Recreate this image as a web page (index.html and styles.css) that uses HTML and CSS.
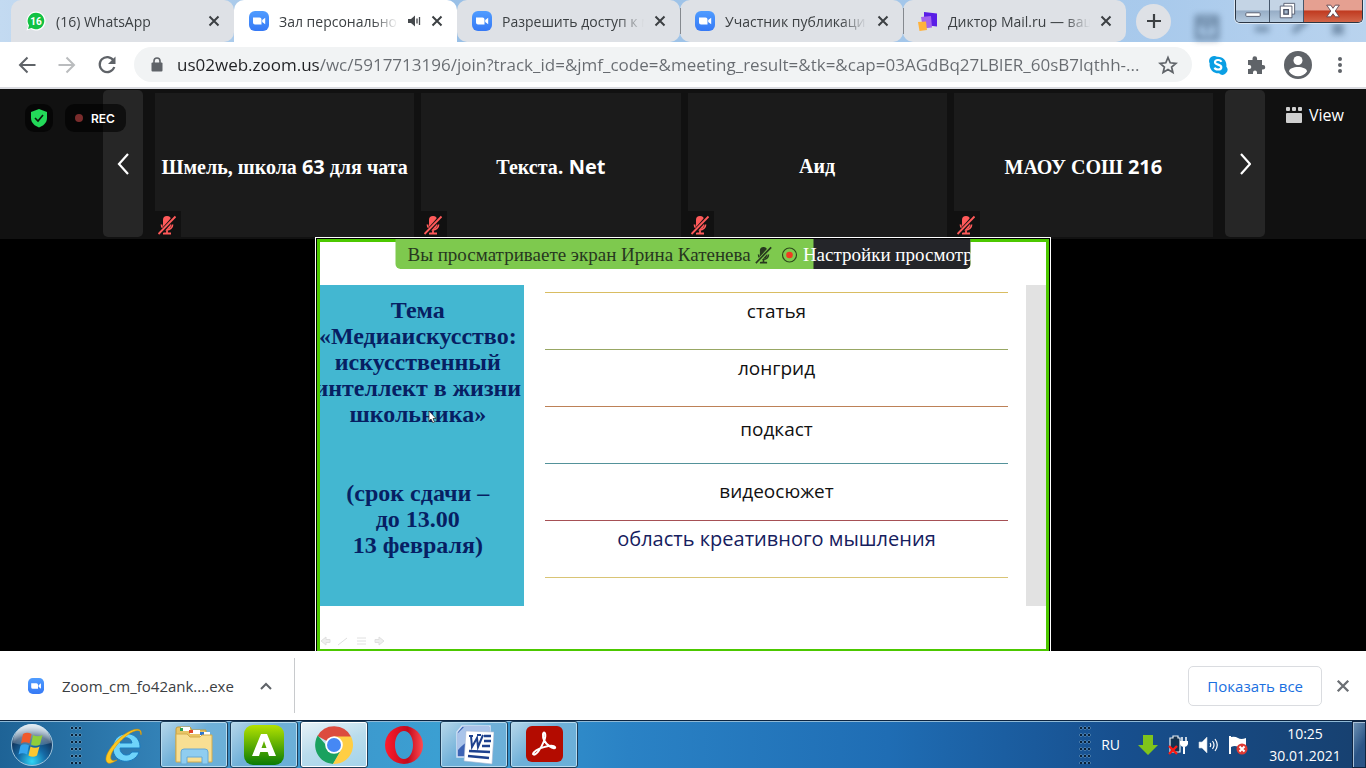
FILE: index.html
```html
<!DOCTYPE html>
<html lang="ru">

	<head>
		<meta charset="UTF-8">
		<meta name="viewport" content="width=device-width,initial-scale=1" />
		<title>Зал персональной конференции</title>
		<link rel="stylesheet" href="styles.css">
	</head>

	<body>
		<!-- shared symbols -->
		<svg class="defs" aria-hidden="true">
			<defs>
				<linearGradient id="zoomBlue" x1="0" y1="0" x2="0" y2="1">
					<stop offset="0" stop-color="#4f9cff" />
					<stop offset="1" stop-color="#3679f5" />
				</linearGradient>
				<symbol id="close" viewBox="0 0 12 12">
					<path d="M1.500 1.500l9 9M10.500 1.500l-9 9" fill="none" stroke="currentColor" stroke-width="2" />
				</symbol>
				<symbol id="zoom" viewBox="0 0 20 20">
					<rect width="20" height="20" rx="6" fill="url(#zoomBlue)" />
					<path d="M4 6.500h6.500a2 2 0 0 1 2 2v5H6a2 2 0 0 1-2-2zM13.200 9l3-2.300v6.600l-3-2.300z" fill="#fff" />
				</symbol>
				<symbol id="muted" viewBox="0 0 20 20">
					<path d="M6 5a4 4 0 0 1 8 0v5a4 4 0 0 1-8 0z" fill="currentColor" />
					<path d="M4.500 9.500c0 7 11 7 11 0M10 15v3M6 18.500h8" fill="none" stroke="currentColor" stroke-width="1.800" />
					<path d="M18.500 1L2 19.500" stroke="var(--cut)" stroke-width="4" />
					<path d="M18.500 1.500L1.500 19" stroke="currentColor" stroke-width="1.800" />
				</symbol>
			</defs>
		</svg>

		<header class="tabbar">
			<div class="tab">
				<svg class="favicon" viewBox="0 0 20 20">
					<path d="M10 .5A9.500 9.500 0 1 1 5 18L.5 19.500 2 15A9.500 9.500 0 0 1 10 .5z" fill="#fff" />
					<path d="M10 1.700A8.300 8.300 0 1 1 5.500 17L2 18l1-3.500A8.300 8.300 0 0 1 10 1.700z" fill="#12c144" />
					<text x="10" y="13.500" class="badge-num">16</text>
				</svg>
				<span class="tab-title">(16) WhatsApp</span>
				<button class="icon-btn tab-close" aria-label="Закрыть"><svg><use href="#close" /></svg></button>
			</div>
			<div class="tab active">
				<svg class="favicon"><use href="#zoom" /></svg>
				<span class="tab-title">Зал персонально</span>
				<svg class="sound" viewBox="0 0 13 12">
					<path d="M0 4h3l4-3.500v11L3 8H0z" fill="#45494d" />
					<path d="M9 3.500v5M11.500 2v8" stroke="#45494d" stroke-width="1.300" />
				</svg>
				<button class="icon-btn tab-close" aria-label="Закрыть"><svg><use href="#close" /></svg></button>
			</div>
			<div class="tab">
				<svg class="favicon"><use href="#zoom" /></svg>
				<span class="tab-title">Разрешить доступ к м</span>
				<button class="icon-btn tab-close" aria-label="Закрыть"><svg><use href="#close" /></svg></button>
			</div>
			<div class="tab divided">
				<svg class="favicon"><use href="#zoom" /></svg>
				<span class="tab-title">Участник публикаци</span>
				<button class="icon-btn tab-close" aria-label="Закрыть"><svg><use href="#close" /></svg></button>
			</div>
			<div class="tab divided">
				<svg class="favicon" viewBox="0 0 20 20">
					<path d="M6 1l13 1.500v13L6 14z" fill="#5a1ee6" />
					<path d="M3 6l10-1 1 11.500-9 1z" fill="#a463ef" />
					<path d="M0 11l8-.5 1 8.500-7.500 1z" fill="#ffb23c" />
				</svg>
				<span class="tab-title">Диктор Mail.ru — ваш</span>
				<button class="icon-btn tab-close" aria-label="Закрыть"><svg><use href="#close" /></svg></button>
			</div>
			<button class="icon-btn new-tab" aria-label="Новая вкладка">
				<svg viewBox="0 0 16 16"><path d="M8 1v14M1 8h14" stroke="#3c4043" stroke-width="2.200" /></svg>
			</button>
			<svg class="glass" viewBox="0 0 180 28" aria-hidden="true">
				<path d="M14 3h20v21H14zM14 9h20M24 9v10" fill="none" stroke="#4d6884" stroke-width="4" />
				<path d="M72 15h14M110 18l14-12M150 10l10 10M160 10l-10 10" stroke="#4d6884" stroke-width="5" />
			</svg>
			<div class="win-controls">
				<button class="win-btn" aria-label="Свернуть">
					<svg viewBox="0 0 20 20"><rect x="2" y="12" width="16" height="4" rx="1" fill="#fff" stroke="#50576a" /></svg>
				</button>
				<button class="win-btn" aria-label="Свернуть в окно">
					<svg viewBox="0 0 20 20"><path d="M6.500 1.500h12v12h-3v4h-13v-13h4z" fill="#fff" stroke="#50576a" /><path d="M6.500 4.500h9v9" fill="none" stroke="#50576a" /><rect x="6.500" y="8.500" width="5" height="5" fill="#a5b9cf" stroke="#50576a" stroke-width="1.500" /></svg>
				</button>
				<button class="win-btn win-close" aria-label="Закрыть окно">
					<svg viewBox="0 0 20 20"><path d="M3 3.500h4.500L10 7l2.500-3.500H17L12.500 10l4.500 6.500h-4.500L10 13l-2.500 3.500H3L7.500 10z" fill="#fff" stroke="#5d4650" /></svg>
				</button>
			</div>
		</header>

		<nav class="toolbar">
			<button class="icon-btn" aria-label="Назад">
				<svg viewBox="0 0 20 20"><path d="M18.500 10H3M10.500 2.500L3 10l7.500 7.500" fill="none" stroke="#5f6368" stroke-width="2" /></svg>
			</button>
			<button class="icon-btn" aria-label="Вперёд" disabled>
				<svg viewBox="0 0 20 20"><path d="M1.500 10H17M9.500 2.500L17 10l-7.500 7.500" fill="none" stroke="#babcbe" stroke-width="2" /></svg>
			</button>
			<button class="icon-btn" aria-label="Обновить">
				<svg viewBox="0 0 20 20"><path d="M16.500 5.500A7.500 7.500 0 1 0 17.300 12" fill="none" stroke="#5f6368" stroke-width="2.200" /><path d="M18.500 1.500v7.500h-7.500z" fill="#5f6368" /></svg>
			</button>
			<div class="omnibox">
				<svg class="lock" viewBox="0 0 12 15">
					<rect x=".5" y="5.500" width="11" height="9" rx="1" fill="#5f6368" />
					<path d="M3 6V4a3 3 0 0 1 6 0v2" fill="none" stroke="#5f6368" stroke-width="1.600" />
				</svg>
				<input class="url" type="text" aria-label="Адрес" value="us02web.zoom.us/wc/5917713196/join?track_id=&amp;jmf_code=&amp;meeting_result=&amp;tk=&amp;cap=03AGdBq27LBlER_60sB7lqthh-...">
				<button class="icon-btn" aria-label="В закладки">
					<svg viewBox="0 0 20 20"><path d="M10 2.500l2.200 5.300 5.700.5-4.300 3.700 1.300 5.500-4.900-3-4.900 3 1.300-5.500L2.100 8.300l5.700-.5z" fill="none" stroke="#5f6368" stroke-width="1.700" /></svg>
				</button>
			</div>
			<div class="extensions">
				<button class="icon-btn" aria-label="Skype">
					<svg viewBox="0 0 20 20"><path d="M6 1a5 5 0 0 1 3 .7 8.500 8.500 0 0 1 9.300 9.800A5 5 0 0 1 11 18.300 8.500 8.500 0 0 1 1.700 8.500 5 5 0 0 1 6 1z" fill="#0a9fe4" /><path d="M13.300 6.800C12.500 4.300 7 4.400 7 7.200s6.300 2 6.300 5-5.800 3-6.700.4" fill="none" stroke="#fff" stroke-width="2.200" /></svg>
				</button>
				<button class="icon-btn" aria-label="Расширения">
					<svg viewBox="0 0 20 20"><path d="M2 5h4.500V3.500a2.300 2.300 0 0 1 4.600 0V5H16v5h1a2.200 2.200 0 0 1 0 4.500h-1V19h-5v-1.500a2 2 0 0 0-4 0V19H2v-5h1.300a2 2 0 0 0 0-4H2z" fill="#5f6368" /></svg>
				</button>
				<button class="icon-btn avatar" aria-label="Профиль">
					<svg viewBox="0 0 28 28"><circle cx="14" cy="14" r="14" fill="#5f6368" /><circle cx="14" cy="9.500" r="4.500" fill="#fff" /><path d="M5 20.500c0-6 18-6 18 0a11 11 0 0 1-18 0z" fill="#fff" /></svg>
				</button>
				<button class="icon-btn" aria-label="Меню">
					<svg viewBox="0 0 20 20" fill="#5f6368"><circle cx="10" cy="4" r="2" /><circle cx="10" cy="10" r="2" /><circle cx="10" cy="16" r="2" /></svg>
				</button>
			</div>
		</nav>

		<main class="meeting">
			<section class="strip">
				<button class="pager" aria-label="Предыдущие участники">
					<svg viewBox="0 0 12 22"><path d="M11 1L2 11l9 10" fill="none" stroke="#fff" stroke-width="2.200" /></svg>
				</button>
				<ul class="gallery">
					<li class="tile">
						<span>Шмель, школа <b>63</b> для чата</span>
						<i class="mic-off"><svg><use href="#muted" /></svg></i>
					</li>
					<li class="tile">
						<span>Текста<b>. Net</b></span>
						<i class="mic-off"><svg><use href="#muted" /></svg></i>
					</li>
					<li class="tile">
						<span>Аид</span>
						<i class="mic-off"><svg><use href="#muted" /></svg></i>
					</li>
					<li class="tile">
						<span>МАОУ СОШ <b>216</b></span>
						<i class="mic-off"><svg><use href="#muted" /></svg></i>
					</li>
				</ul>
				<button class="pager" aria-label="Следующие участники">
					<svg viewBox="0 0 12 22"><path d="M2 1l9 10-9 10" fill="none" stroke="#fff" stroke-width="2.200" /></svg>
				</button>
				<div class="status">
					<button class="chip" aria-label="Шифрование">
						<svg viewBox="0 0 18 20"><path d="M9 1l8 3v6c0 5-4 8-8 9.500C5 18 1 15 1 10V4z" fill="#23d959" /><path d="M5 10l3 3 5-6" fill="none" stroke="#0a1a0d" stroke-width="1.600" /></svg>
					</button>
					<span class="chip rec">REC</span>
				</div>
				<button class="view">
					<svg viewBox="0 0 16 16" fill="#d0d0d0"><rect width="4" height="4" rx="1" /><rect x="6" width="4" height="4" rx="1" /><rect x="12" width="4" height="4" rx="1" /><rect y="6" width="16" height="10" rx="1" /></svg>
					View
				</button>
			</section>

			<section class="stage">
				<div class="share">
					<div class="banner">
						<p class="banner-text">
							Вы просматриваете экран Ирина Катенева
							<svg class="banner-mic" viewBox="0 0 20 20"><use href="#muted" /></svg>
							<svg class="banner-rec" viewBox="0 0 16 16"><circle cx="8" cy="8" r="7" fill="none" stroke="#2d4a1c" stroke-width="1.200" /><circle cx="8" cy="8" r="3.300" fill="#f03a22" /></svg>
						</p>
						<button class="banner-menu">Настройки просмотра</button>
					</div>
					<div class="slide">
						<div class="topic">
							<h1>Тема<br>«Медиаискусство:<br>искусственный<br>интеллект в жизни<br>школьника»</h1>
							<p>(срок сдачи –<br>до 13.00<br>13 февраля)</p>
							<svg class="pointer" viewBox="0 0 8 12"><path d="M1 0v10l2-2 2 4 1.500-1L5 7.500h3z" fill="#fff" stroke="#222" stroke-width=".7" /></svg>
						</div>
						<ul class="formats">
							<li class="gold">статья</li>
							<li class="olive">лонгрид</li>
							<li class="brown mid">подкаст</li>
							<li class="teal low">видеосюжет</li>
							<li class="wine navy">область креативного мышления</li>
						</ul>
						<div class="edge"></div>
					</div>
					<svg class="slide-nav" viewBox="0 0 66 12" aria-hidden="true">
						<path d="M1 6l5-4v2.500h4v3H6V10z" />
						<path d="M18 10l9-7" />
						<path d="M37 3h9M37 6h9M37 9h9" />
						<path d="M64 6l-5-4v2.500h-4v3h4V10z" />
					</svg>
				</div>
			</section>
		</main>

		<section class="downloads">
			<div class="download">
				<svg class="file-icon"><use href="#zoom" /></svg>
				<a class="file-name" href="#">Zoom_cm_fo42ank....exe</a>
				<button class="icon-btn" aria-label="Действия">
					<svg class="chevron" viewBox="0 0 12 8"><path d="M1 7l5-5 5 5" fill="none" stroke="#5f6368" stroke-width="2" /></svg>
				</button>
			</div>
			<button class="show-all">Показать все</button>
			<button class="icon-btn shelf-close" aria-label="Закрыть панель"><svg><use href="#close" /></svg></button>
		</section>

		<footer class="taskbar">
			<button class="start" aria-label="Пуск">
				<svg viewBox="0 0 44 44">
					<defs>
						<radialGradient id="orb" cx=".5" cy=".9" r=".85">
							<stop offset="0" stop-color="#2fd6f6" />
							<stop offset=".4" stop-color="#156aa6" />
							<stop offset=".75" stop-color="#12375f" />
							<stop offset="1" stop-color="#8fb0c8" />
						</radialGradient>
						<linearGradient id="orbShine" x1="0" y1="0" x2="0" y2="1">
							<stop offset="0" stop-color="#fff" stop-opacity=".75" />
							<stop offset="1" stop-color="#fff" stop-opacity=".15" />
						</linearGradient>
					</defs>
					<circle cx="22" cy="22" r="20.500" fill="url(#orb)" stroke="#9fc4dc" />
					<path d="M3 20a19 19 0 0 1 38 0q-19 6-38 0z" fill="url(#orbShine)" />
					<path d="M13 11q4-2.500 8.500 0l-2 9.500q-4.500-2.500-8.500 0z" fill="#f0592a" />
					<path d="M23 12q4.500 2.500 9.500 0l-2.500 9.500q-4 2.500-9 0z" fill="#8fce3a" />
					<path d="M10.500 22.500q4-2.500 8.500 0l-2 9q-4.500-2.500-8.500 0z" fill="#35a5ee" />
					<path d="M20.500 23.500q4.500 2.500 9 0l-2.500 9q-4 2.500-8.500 0z" fill="#fdc72f" />
				</svg>
			</button>
			<span class="grip"></span>
			<button class="task plain" aria-label="Internet Explorer">
				<svg viewBox="0 0 40 40">
					<path d="M36 23H16c0 8 9 9 12 4h7c-4 13-26 13-26-4 0-19 28-19 27 0zm-8-5c-1-7-11-7-12 0z" fill="#6fd4fa" stroke="#1a7cc0" stroke-width="1" />
					<path d="M37 10c2-8-7-7-16-1C9 17-3 34 4 38c2 1 6-1 9-3-6 2-7-1-6-5C10 20 29 2 36 6z" fill="#fcc822" stroke="#d89400" stroke-width=".6" />
				</svg>
			</button>
			<button class="task" aria-label="Проводник">
				<svg viewBox="0 0 40 40">
					<path d="M2 4q0-2 2-2h12l2 3h14v30H2z" fill="#e8c566" stroke="#c39a38" />
					<path d="M7 2h9v4H7zM16 5h10v4H16zM26 7h10v4H26z" fill="#fff" />
					<path d="M6 3h3v3H6z" fill="#2da052" />
					<path d="M15 5h4v3h-4z" fill="#e0492c" />
					<path d="M26 7h4v3h-4z" fill="#2e75d0" />
					<path d="M2 9h11l3 3h10l2-2h10v27H2z" fill="#f8df93" stroke="#d4ac4c" />
					<path d="M7 39V27q0-3 3-3h21q3 0 3 3v12h-6v-7H13v7z" fill="#8fcdf0" stroke="#66a8d4" />
				</svg>
			</button>
			<button class="task" aria-label="Amigo">
				<svg viewBox="0 0 40 40">
					<defs><linearGradient id="lime" x1="0" y1="0" x2="0" y2="1"><stop offset="0" stop-color="#b4e200" /><stop offset="1" stop-color="#087a06" /></linearGradient></defs>
					<rect width="40" height="40" rx="9" fill="url(#lime)" />
					<path d="M17 9h6l9 22h-7l-1.300-4h-7.400L15 31H8zm3 7l-2.500 7h5z" fill="#fff" />
				</svg>
			</button>
			<button class="task current" aria-label="Chrome">
				<svg viewBox="0 0 40 40">
					<path d="M20 20L3.500 11A19 19 0 0 1 37 11.500z" fill="#dc4b3e" />
					<path d="M20 20h-8L3.700 10.500A19 19 0 0 0 19 39l8-13z" fill="#1aa15f" />
					<path d="M20 11.500h17A19 19 0 0 1 19 39l9-16z" fill="#ffce44" />
					<circle cx="20" cy="20" r="8.800" fill="#fff" />
					<circle cx="20" cy="20" r="7" fill="#4688f4" />
				</svg>
			</button>
			<button class="task plain" aria-label="Opera">
				<svg viewBox="0 0 40 40">
					<defs><linearGradient id="operaRed" x1="0" y1="0" x2="1" y2="0"><stop offset="0" stop-color="#ff1b2d" /><stop offset=".6" stop-color="#c20a1c" /><stop offset="1" stop-color="#ff4a50" /></linearGradient></defs>
					<path d="M20 1a19 19 0 1 0 0 38 19 19 0 1 0 0-38zm0 5c5 0 9 6 9 14s-4 14-9 14-9-6-9-14 4-14 9-14z" fill="url(#operaRed)" fill-rule="evenodd" />
				</svg>
			</button>
			<button class="task" aria-label="Word">
				<svg viewBox="0 0 40 40">
					<path d="M8 1h28v31H3V7z" fill="#3c63b4" stroke="#d4e2f6" stroke-width="1.500" />
					<path d="M10 2h25v8Q16 11 4 25V8z" fill="#a9c4ea" />
					<path d="M12 6l28 1-2 32-28-3z" fill="#fff" stroke="#a9b9d4" stroke-width=".6" />
					<path d="M15 11h4M23 10h4M17 11l1 11 5-9 1 9 5-12" fill="none" stroke="#1e418e" stroke-width="2" />
					<path d="M30 11h7M30 16h7M28 21h8M15 26l21 1M14 31l21 2" stroke="#1e418e" stroke-width="2.400" />
				</svg>
			</button>
			<button class="task" aria-label="Acrobat Reader">
				<svg viewBox="0 0 40 40">
					<rect x="2" y="1" width="37" height="36" rx="6" fill="#b30b00" />
					<path d="M9 29c2-6 20-10 22-7 2 4-13-2-12-13 1-4 4 0 1 7-3 8-9 16-11 13z" fill="none" stroke="#fff" stroke-width="2" />
				</svg>
			</button>
			<div class="tray">
				<span class="grip"></span>
				<span class="lang">RU</span>
				<svg viewBox="0 0 20 20"><path d="M5 0h10v10h5L10 20 0 10h5z" fill="#7fc41c" /></svg>
				<svg viewBox="0 0 20 20">
					<path d="M5 1h5v2h2v14H2V3h3z" fill="#15324f" stroke="#e8eef4" stroke-width="1.200" />
					<path d="M14 2v4M18 2v4" stroke="#fff" stroke-width="1.500" />
					<path d="M12 6h8v3q-1 3-4 3t-4-3zM15 12h2v7h-2z" fill="#fff" />
					<path d="M1 11l8 8M9 11l-8 8" stroke="#ff1a12" stroke-width="2.400" />
				</svg>
				<svg viewBox="0 0 20 20">
					<path d="M1 7h3l5-5v16l-5-5H1z" fill="#fff" stroke="#c5d2de" stroke-width=".6" />
					<path d="M12 8q1.500 2 0 4M14.500 6q3 4 0 8M17 4q4.500 6 0 12" fill="none" stroke="#fff" stroke-width="1.200" />
				</svg>
				<svg viewBox="0 0 20 20">
					<path d="M2 1v18" stroke="#fff" stroke-width="2" />
					<path d="M3 2q4-1 7 1t8 0v9q-5 2-8 0t-7 0z" fill="#fff" />
					<circle cx="14" cy="14" r="5.500" fill="#dd3a34" />
					<path d="M11.500 11.500l5 5M16.500 11.500l-5 5" stroke="#fff" stroke-width="2" />
				</svg>
				<time class="clock">10:25<br>30.01.2021</time>
				<button class="desktop" aria-label="Свернуть все окна"></button>
			</div>
		</footer>
	</body>

</html>
```
FILE: styles.css
```css
* {
	box-sizing: border-box;
	margin: 0;
	padding: 0;
}

body {
	display: flex;
	flex-direction: column;
	height: 100vh;
	font-family: "Open Sans", "Noto Sans", sans-serif;
	font-size: 14px;
	color: #3c4043;
	background: #000;
}

button {
	border: 0;
	background: none;
	font: inherit;
	color: inherit;
}

svg {
	display: block;
	flex: none;
}

ul {
	list-style: none;
}

.defs {
	position: absolute;
	width: 0;
	height: 0;
}

.icon-btn {
	display: flex;
	flex: none;
	align-items: center;
	justify-content: center;
}

.icon-btn svg {
	width: 20px;
	height: 20px;
}

/* tabs */
.tabbar {
	position: relative;
	display: flex;
	flex: none;
	align-items: center;
	height: 42px;
	padding-left: 11px;
	background: linear-gradient(90deg, #c3daf1, #98bfe6 30%, #a9caec 85%, #b9d3ee);
}

.tab {
	position: relative;
	display: flex;
	flex: 0 1 223px;
	align-items: center;
	gap: 10px;
	min-width: 0;
	height: 42px;
	padding: 0 14px 0 15px;
	border-radius: 10px;
	background: #dee1e6;
}

.tab:first-child {
	border-radius: 10px 10px 10px 0;
}

.tab.active {
	border-radius: 10px 10px 0 0;
	background: #fff;
}

.tab.divided:before {
	position: absolute;
	left: 0;
	height: 26px;
	width: 1px;
	content: '';
	background: #85898f;
}

.favicon {
	width: 20px;
	height: 20px;
}

.badge-num {
	font-family: Roboto, sans-serif;
	font-size: 10px;
	font-weight: 700;
	text-anchor: middle;
	fill: #fff;
}

.tab-title {
	flex: 1;
	overflow: hidden;
	white-space: nowrap;
	-webkit-mask-image: linear-gradient(90deg, #000 calc(100% - 26px), transparent);
	mask-image: linear-gradient(90deg, #000 calc(100% - 26px), transparent);
}

.sound {
	width: 13px;
	height: 12px;
}

.tab-close svg {
	width: 12px;
	height: 12px;
}

.new-tab {
	width: 35px;
	height: 35px;
	margin-left: 10px;
	border-radius: 50%;
	background: #dee1e6;
}

.new-tab svg {
	width: 16px;
	height: 16px;
}

.glass {
	width: 180px;
	height: 28px;
	margin: 14px 0 0 12px;
	filter: blur(3px);
	opacity: .7;
}

.win-controls {
	position: absolute;
	top: 0;
	right: 3px;
	display: flex;
	height: 23px;
	overflow: hidden;
	border: 1px solid #2b3644;
	border-top: 0;
	border-radius: 0 0 5px 5px;
	box-shadow: 0 0 0 1px #dce8f4;
}

.win-btn {
	display: flex;
	align-items: center;
	justify-content: center;
	width: 34px;
	border-right: 1px solid #46566a;
	background: linear-gradient(#c4d4e5 45%, #96adc6 50%, #b4c9de);
}

.win-btn svg {
	width: 18px;
	height: 18px;
}

.win-close {
	width: 58px;
	border-right: 0;
	background: linear-gradient(#e5a091 45%, #c03a20 50%, #d2664a);
}

/* toolbar */
.toolbar {
	display: flex;
	flex: none;
	align-items: center;
	height: 47px;
	padding: 0 16px 0 17px;
	gap: 20px;
	border-bottom: 2px solid #dadbe0;
	background: #fff;
}

.omnibox {
	display: flex;
	flex: 1;
	align-items: center;
	gap: 14px;
	min-width: 0;
	height: 35px;
	margin-left: -3px;
	padding: 0 14px 0 17px;
	border-radius: 18px;
	background: #f1f3f4;
}

.lock {
	width: 12px;
	height: 15px;
}

.url {
	flex: 1;
	min-width: 0;
	height: 30px;
	border: 0;
	outline: 0;
	font: 17px "Open Sans", "Noto Sans", sans-serif;
	/* host part is darker than the path */
	color: transparent;
	background: linear-gradient(90deg, #202124 143px, #676b70 143px);
	-webkit-background-clip: text;
	background-clip: text;
}

.extensions {
	display: flex;
	align-items: center;
	gap: 18px;
	margin-left: -4px;
}

.avatar svg {
	width: 28px;
	height: 28px;
}

/* meeting */
.meeting {
	display: flex;
	flex: 1;
	flex-direction: column;
	min-height: 0;
}

.strip {
	position: relative;
	display: flex;
	flex: none;
	gap: 12px;
	height: 150px;
	padding: 1px 101px 2px 103px;
	background: #111;
}

.pager {
	display: flex;
	flex: none;
	align-items: center;
	justify-content: center;
	width: 40px;
	border-radius: 5px;
	background: #262626;
}

.pager svg {
	width: 12px;
	height: 22px;
}

.gallery {
	display: grid;
	flex: 1;
	grid-template-columns: repeat(4, 1fr);
	gap: 7px;
	padding-top: 3px;
}

.tile {
	position: relative;
	display: flex;
	align-items: center;
	justify-content: center;
	padding-top: 3px;
	font: bold 20px "Liberation Serif", serif;
	white-space: nowrap;
	color: #fff;
	background: #1b1b1b;
}

.tile b {
	font-family: "Open Sans", sans-serif;
	font-weight: 700;
}

.mic-off {
	--cut: #111;
	position: absolute;
	bottom: 0;
	left: 0;
	padding: 4px 4px 2px 2px;
	color: #ff5a5a;
	background: #111;
}

.mic-off svg {
	width: 20px;
	height: 20px;
}

.status {
	position: absolute;
	top: 15px;
	left: 25px;
	display: flex;
	gap: 12px;
}

.chip {
	display: flex;
	align-items: center;
	justify-content: center;
	min-width: 28px;
	height: 28px;
	border-radius: 9px;
	background: rgba(0, 0, 0, .6);
}

.chip svg {
	width: 18px;
	height: 20px;
}

.rec {
	gap: 8px;
	padding: 0 11px 0 10px;
	font: 600 12px Inter, sans-serif;
	color: #fff;
}

.rec:before {
	width: 8px;
	height: 8px;
	border-radius: 50%;
	content: '';
	background: #7a2c2c;
}

.view {
	position: absolute;
	top: 15px;
	right: 22px;
	display: flex;
	align-items: center;
	gap: 7px;
	font-size: 16px;
	line-height: 22px;
	color: #fff;
}

.view svg {
	width: 16px;
	height: 16px;
}

.stage {
	display: flex;
	flex: 1;
	justify-content: center;
	min-height: 0;
	background: #000;
}

.share {
	position: relative;
	z-index: 1;
	flex: none;
	height: 100%;
	aspect-ratio: 16 / 9;
	padding-top: 43px;
	border: 3px solid #4cc800;
	border-bottom-width: 2px;
	background: #fff;
	box-shadow: 0 0 0 1px #000, 0 0 0 2px #fff;
	clip-path: inset(-2px -2px 0 -2px);
}

.banner {
	position: absolute;
	top: -3px;
	left: 50%;
	display: flex;
	width: 575px;
	height: 30px;
	overflow: hidden;
	border-radius: 0 0 5px 5px;
	font: 19px/32px "Liberation Serif", serif;
	white-space: nowrap;
	background: #7ec94e;
	transform: translateX(-50%);
}

.banner-text {
	--cut: #7ec94e;
	display: flex;
	flex: 1;
	align-items: center;
	padding: 2px 0 0 12px;
	color: #27381f;
}

.banner-mic {
	width: 18px;
	height: 18px;
	margin-left: 4px;
}

.banner-rec {
	width: 16px;
	height: 16px;
	margin-left: 9px;
}

.banner-menu {
	display: flex;
	flex: none;
	justify-content: center;
	width: 157px;
	color: #fff;
	background: #242529;
}

.slide {
	display: flex;
	height: 321px;
}

.topic {
	position: relative;
	display: flex;
	flex: none;
	flex-direction: column;
	align-items: center;
	gap: 53px;
	width: 204px;
	overflow: hidden;
	padding: 12px 8px 0 0;
	font: bold 24px/26px "Liberation Serif", serif;
	text-align: center;
	white-space: nowrap;
	color: #071f63;
	background: #43b7d1;
}

.topic h1 {
	font: inherit;
}

.pointer {
	position: absolute;
	top: 126px;
	left: 108px;
	width: 8px;
	height: 12px;
}

.formats {
	flex: 1;
	align-self: flex-start;
	margin: 7px 18px 0 21px;
	border-bottom: 1px solid #d9c475;
}

.formats li {
	height: 57px;
	padding-top: 5px;
	border-top: 1px solid;
	font-size: 19px;
	line-height: 26px;
	text-align: center;
}

.formats .mid {
	padding-top: 9px;
}

.formats .low {
	padding-top: 14px;
}

.formats .gold {
	border-color: #d9bd62;
}

.formats .olive {
	border-color: #98a764;
}

.formats .brown {
	border-color: #bd8157;
}

.formats .teal {
	border-color: #54929a;
}

.formats .wine {
	border-color: #a65055;
}

.formats li {
	color: #111;
}

.formats .navy {
	font-size: 20px;
	color: #16205e;
}

.edge {
	width: 20px;
	background: #e2e2e2;
}

.slide-nav {
	width: 66px;
	height: 12px;
	margin-top: 29px;
	fill: #eee;
	stroke: #e0e0e0;
}

/* downloads */
.downloads {
	display: flex;
	flex: none;
	align-items: center;
	height: 69px;
	padding-right: 16px;
	background: #fff;
}

.download {
	display: flex;
	align-items: center;
	gap: 18px;
	height: 55px;
	padding: 0 22px 0 28px;
	border-right: 1px solid #c8cacd;
}

.file-icon {
	width: 16px;
	height: 16px;
}

.file-name {
	margin-right: 8px;
	font-size: 15px;
	color: #3c4043;
	text-decoration: none;
}

.show-all {
	height: 40px;
	margin: 0 14px 0 auto;
	padding: 0 18px;
	border: 1px solid #dadce0;
	border-radius: 5px;
	font-size: 15px;
	color: #1a6fe0;
}

.download .chevron {
	width: 12px;
	height: 8px;
}

.shelf-close {
	color: #6b6f74;
}

.shelf-close svg {
	width: 14px;
	height: 14px;
}

/* taskbar */
.taskbar {
	display: flex;
	flex: none;
	align-items: stretch;
	height: 48px;
	border-top: 1px solid #0c2440;
	background: linear-gradient(90deg, #1e6396, #3e92c8 18%, #3b9fd2 32%, #2a82c5 46%, #1f6db4 65%, #174f8e 82%, #17406f);
	box-shadow: inset 0 1px #8fb9d6;
}

.start {
	display: flex;
	align-items: center;
	width: 70px;
	padding-left: 10px;
}

.start svg {
	width: 44px;
	height: 44px;
}

.grip {
	align-self: center;
	width: 12px;
	height: 38px;
	background: radial-gradient(circle at 2px 2px, #0a2138 1px, #7fa9c5 1px, transparent 2px) 0 0 / 4px 7px;
}

.task {
	display: flex;
	align-items: center;
	justify-content: center;
	width: 68px;
	margin-right: 2px;
	border: 1px solid #1c3c58;
	border-radius: 3px;
	background: linear-gradient(135deg, #b7d7ea, #6fb0d8 45%, #69afd8);
	box-shadow: inset 0 0 0 1px #b8dcf0;
}

.task svg {
	width: 40px;
	height: 40px;
}

.task.current {
	background: linear-gradient(160deg, #e9f2f7, #b9dcec 50%, #a3d3ea);
	box-shadow: inset 0 0 0 1px #fff;
}

.task.plain {
	border-color: transparent;
	background: none;
	box-shadow: none;
}

.grip + .task {
	margin-left: 8px;
}

.tray {
	display: flex;
	align-items: center;
	gap: 10px;
	margin-left: auto;
	color: #fff;
}

.tray > svg {
	width: 20px;
	height: 20px;
}

.lang {
	margin-right: 8px;
}

.clock {
	width: 94px;
	margin-right: -10px;
	line-height: 22px;
	text-align: center;
}

.desktop {
	align-self: stretch;
	width: 14px;
	border: 1px solid #0e2542;
	background: linear-gradient(120deg, #6f93b5, #2a5486 60%);
	box-shadow: inset 1px 1px #a7bfd6;
}
```
